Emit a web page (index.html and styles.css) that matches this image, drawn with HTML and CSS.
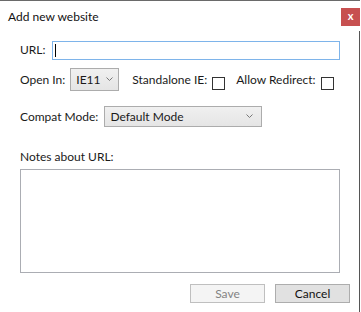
FILE: index.html
```html
<!DOCTYPE html>
<html lang="en">
<head>
    <meta charset="UTF-8">
    <meta name="viewport" content="width=device-width, initial-scale=1.0">
    <title>Add new website</title>
    <link rel="stylesheet" href="styles.css">
</head>
<body>
    <div class="dialog">
        <div class="titlebar">
            <span class="title">Add new website</span>
            <span class="close">x</span>
        </div>

        <div class="content">
            <div class="row row-url">
                <span class="label">URL:</span>
                <div class="textbox"><span class="caret"></span></div>
            </div>

            <div class="row row-open">
                <span class="label">Open In:</span>
                <div class="combo combo-browser">
                    <span>IE11</span>
                    <svg class="chevron" width="7" height="4" viewBox="0 0 7 4"><polyline points="0.5,0.5 3.5,3.5 6.5,0.5" fill="none" stroke="#777" stroke-width="1"/></svg>
                </div>
                <span class="label label-standalone">Standalone IE:</span>
                <span class="checkbox"></span>
                <span class="label label-redirect">Allow Redirect:</span>
                <span class="checkbox"></span>
            </div>

            <div class="row row-compat">
                <span class="label">Compat Mode:</span>
                <div class="combo combo-mode">
                    <span>Default Mode</span>
                    <svg class="chevron" width="7" height="4" viewBox="0 0 7 4"><polyline points="0.5,0.5 3.5,3.5 6.5,0.5" fill="none" stroke="#777" stroke-width="1"/></svg>
                </div>
            </div>

            <div class="notes-label">Notes about URL:</div>
            <div class="notes"></div>

            <div class="buttons">
                <span class="btn btn-disabled">Save</span>
                <span class="btn">Cancel</span>
            </div>
        </div>
    </div>
</body>
</html>
```

FILE: styles.css
```css
body {
    margin: 0;
    background-color: #fff;
    font-family: Lato, "Noto Sans", sans-serif;
    font-size: 12px;
    color: #1a1a1a;
}
.dialog {
    width: 360px;
    height: 312px;
    border-top: 1px solid #6a6a6a;
    box-sizing: border-box;
    display: flex;
    flex-direction: column;
}
.titlebar {
    height: 30px;
    display: flex;
    justify-content: space-between;
    align-items: flex-start;
    padding-left: 8px;
}
.title {
    font-size: 12px;
    line-height: 16px;
    margin-top: 8px;
    color: #111;
}
.close {
    width: 19px;
    height: 18px;
    margin-top: 7px;
    background-color: #c75050;
    color: #fff;
    font-weight: bold;
    font-size: 11px;
    line-height: 16px;
    text-align: center;
}
.content {
    flex: 1;
    border-right: 1px solid #555;
    padding: 9px 19px 0 20px;
}
.row {
    display: flex;
    align-items: center;
}
.label {
    line-height: 16px;
    white-space: nowrap;
}
.row-url {
    height: 20px;
}
.textbox {
    flex: 1;
    height: 19px;
    margin-left: 6px;
    border: 1px solid #7eb4ea;
    box-sizing: border-box;
    display: flex;
    align-items: center;
    padding-left: 2px;
}
.caret {
    width: 1px;
    height: 13px;
    background-color: #000;
}
.row-open {
    margin-top: 8px;
    height: 23px;
}
.combo {
    height: 23px;
    box-sizing: border-box;
    border: 1px solid #acacac;
    background: linear-gradient(#f0f0f0, #e5e5e5);
    display: flex;
    align-items: center;
    justify-content: space-between;
    padding: 0 8px 0 5px;
}
.combo-browser {
    width: 49px;
    margin-left: 5px;
    padding-right: 5px;
}
.chevron {
    margin-top: -2px;
}
.label-standalone {
    margin-left: 13px;
}
.label-redirect {
    margin-left: 11px;
}
.checkbox {
    width: 13px;
    height: 13px;
    box-sizing: border-box;
    border: 1px solid #333;
    background-color: #fff;
    margin-left: 5px;
    align-self: flex-start;
    margin-top: 9px;
}
.row-compat {
    margin-top: 15px;
    height: 21px;
}
.combo-mode {
    width: 158px;
    height: 21px;
    margin-left: 6px;
}
.notes-label {
    margin-top: 22px;
    line-height: 16px;
}
.notes {
    margin-top: 4px;
    height: 104px;
    box-sizing: border-box;
    border: 1px solid #abadb3;
}
.buttons {
    display: flex;
    justify-content: flex-end;
    gap: 10px;
    margin-top: 11px;
    margin-right: -10px;
}
.btn {
    width: 75px;
    height: 19px;
    box-sizing: border-box;
    border: 1px solid #adadad;
    background-color: #e1e1e1;
    text-align: center;
    line-height: 17px;
    color: #111;
}
.btn-disabled {
    background-color: #f4f4f4;
    border-color: #bfbfbf;
    color: #838383;
}
```
